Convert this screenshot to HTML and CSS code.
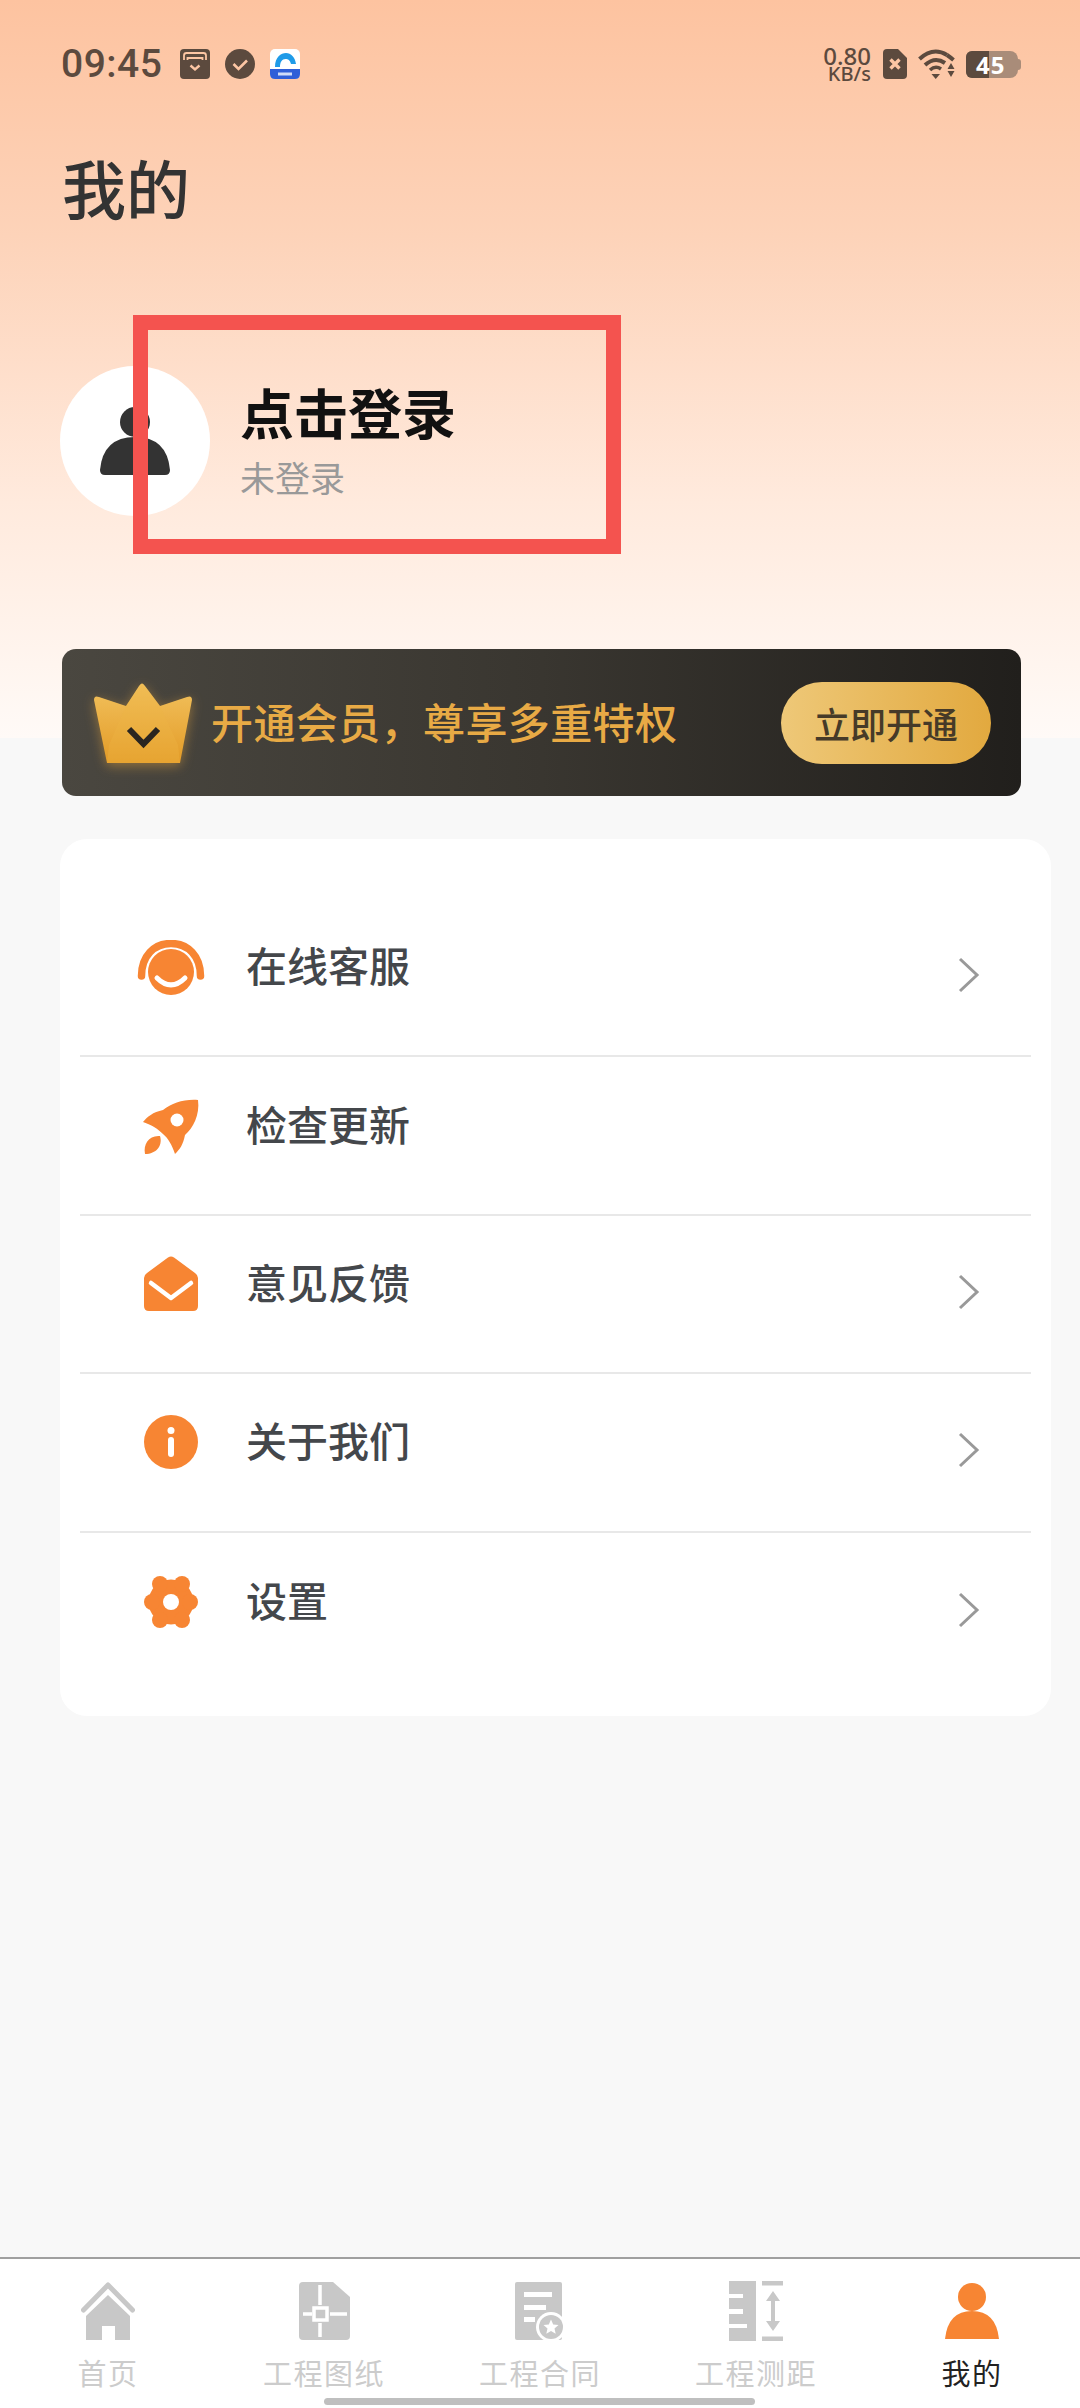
FILE: index.html

```html
<!DOCTYPE html>
<html lang="zh-CN">
<head>
<meta charset="UTF-8">
<meta name="viewport" content="width=device-width, initial-scale=1.0">
<title>我的</title>
<link rel="stylesheet" href="styles.css">
</head>
<body>
<div class="page">

  <div class="status-bar">
    <div class="status-left">
      <span class="clock">09:45</span>
      <svg class="status-icon" viewBox="0 0 30 30">
        <rect width="30" height="30" rx="4" fill="#5c4a3e"/>
        <path d="M4 11V6.500Q4 4 6.500 4H23.500Q26 4 26 6.500V11M7.500 11V9H22.500V11" fill="none" stroke="#fdc6a4" stroke-width="1.800"/>
        <path d="M7 13H23V23H7Z" fill="#5c4a3e"/>
        <path d="M10.500 16.500L15 20.500L19.500 16.500" fill="none" stroke="#fdc6a4" stroke-width="2.400"/>
      </svg>
      <svg class="status-icon" viewBox="0 0 30 30">
        <circle cx="15" cy="15" r="15" fill="#5c4a3e"/>
        <path d="M8.500 15L13.500 20L22 11.500" fill="none" stroke="#fdc6a4" stroke-width="2.600"/>
      </svg>
      <svg class="status-icon" viewBox="0 0 30 30">
        <rect width="30" height="30" rx="5" fill="#fff"/>
        <path d="M0 20H30V25Q30 30 25 30H5Q0 30 0 25Z" fill="#2f5fd8"/>
        <path d="M5 18C5 8 11 4 16 4C21 4 25 8 26 15H21C20 11 18 10 15.500 10C12 10 10 13 10 18Z" fill="#1f9be8"/>
        <rect x="8" y="23.500" width="14" height="3" fill="#cfdcf8"/>
      </svg>
    </div>
    <div class="status-right">
      <div class="net-speed">
        <span class="net-value">0.80</span>
        <span class="net-unit">KB/s</span>
      </div>
      <svg class="sim-icon" viewBox="0 0 24 30">
        <path d="M4 0H15L24 9V26Q24 30 20 30H4Q0 30 0 26V4Q0 0 4 0Z" fill="#5c4a3e"/>
        <path d="M7.500 10.500L16.500 19.500M16.500 10.500L7.500 19.500" stroke="#fdc6a4" stroke-width="3.400"/>
      </svg>
      <svg class="wifi-icon" viewBox="0 0 37 30">
        <path d="M1.500 10Q15 -2.500 29 6" fill="none" stroke="#5c4a3e" stroke-width="4"/>
        <path d="M29 6Q32 8 35.500 11" fill="none" stroke="#5c4a3e" stroke-width="4"/>
        <path d="M7 16Q17 7 27 14" fill="none" stroke="#5c4a3e" stroke-width="4"/>
        <path d="M12 21Q17.500 16 23 20" fill="none" stroke="#5c4a3e" stroke-width="3.500"/>
        <path d="M13.500 25H22L17.700 30Z" fill="#5c4a3e"/>
        <path d="M33 14L36.500 20H29.500ZM29.500 22H36.500L33 28Z" fill="#5c4a3e"/>
      </svg>
      <div class="battery">
        <div class="battery-fill"></div>
        <span class="battery-text">45</span>
        <div class="battery-tip"></div>
      </div>
    </div>
  </div>

  <h1 class="page-title">我的</h1>

  <div class="profile">
    <div class="avatar">
      <svg class="avatar-icon" viewBox="0 0 70 68">
        <circle cx="35" cy="15" r="15" fill="#333"/>
        <path d="M0 63Q3 30 35 30Q67 30 70 63Q70 68 65 68H5Q0 68 0 63Z" fill="#333"/>
      </svg>
    </div>
    <div class="profile-text">
      <div class="profile-name">点击登录</div>
      <div class="profile-sub">未登录</div>
    </div>
  </div>

  <div class="vip-banner">
    <svg class="vip-crown" viewBox="0 0 98 80">
      <defs>
        <linearGradient id="crownGold" x1="0" y1="0" x2="0" y2="1">
          <stop offset="0" stop-color="#f2c25e"/>
          <stop offset="1" stop-color="#e39b27"/>
        </linearGradient>
      </defs>
      <path d="M0 17Q0 12 5 14L32 23L45 3Q48 -2 51 3L66 23L93 14Q98 12 98 17L86 80H13Z" fill="url(#crownGold)"/>
      <path d="M48 0L66 23L84 62L86 80H13L15 62L32 23Z" fill="#eeb445" opacity="0.35"/>
      <path d="M35 46L49.500 61L64 46" fill="none" stroke="#2a2520" stroke-width="6"/>
    </svg>
    <span class="vip-text">开通会员，尊享多重特权</span>
    <div class="vip-button">立即开通</div>
  </div>

  <div class="menu-card">
    <div class="menu-row">
      <div class="menu-main">
        <div class="menu-icon">
          <svg width="68" height="55" viewBox="0 0 68 55">
            <path d="M4.500 36C4.500 16 17 3.500 34 3.500C51 3.500 63.500 16 63.500 36" fill="none" stroke="#f78533" stroke-width="7.500" stroke-linecap="round"/>
            <circle cx="34" cy="32" r="23" fill="#f78533"/>
            <path d="M20 38Q34 52 48 38" fill="none" stroke="#fff" stroke-width="5" stroke-linecap="round"/>
          </svg>
        </div>
        <span class="menu-label">在线客服</span>
      </div>
      <svg class="menu-arrow" viewBox="0 0 22 36"><path d="M2 2L19 18L2 34" fill="none" stroke="#999" stroke-width="3"/></svg>
    </div>
    <div class="menu-row">
      <div class="menu-main">
        <div class="menu-icon">
          <svg width="82" height="80" viewBox="5 1 82 80">
            <path d="M73 15C75 30 68 43 60 50C58 60 55 64 50 69C47 60 43 53 38 49C33 44 27 40 18 37C22 32 28 27 38 25C47 18 59 14 73 15Z" fill="#f78533"/>
            <circle cx="52" cy="35" r="6.500" fill="#fff"/>
            <path d="M35 51C38 61 31 69 20 69C18 59 24 50 35 51Z" fill="#f78533"/>
          </svg>
        </div>
        <span class="menu-label">检查更新</span>
      </div>
    </div>
    <div class="menu-row">
      <div class="menu-main">
        <div class="menu-icon">
          <svg width="54" height="55" viewBox="0 0 54 55">
            <path d="M24 1.500Q27 -0.500 30 1.500L51 17Q54 19 54 22V50Q54 55 49 55H5Q0 55 0 50V22Q0 19 3 17Z" fill="#f78533"/>
            <path d="M7 27L27 42L47 27" fill="none" stroke="#fff" stroke-width="4.500" stroke-linecap="round" stroke-linejoin="round"/>
          </svg>
        </div>
        <span class="menu-label">意见反馈</span>
      </div>
      <svg class="menu-arrow" viewBox="0 0 22 36"><path d="M2 2L19 18L2 34" fill="none" stroke="#999" stroke-width="3"/></svg>
    </div>
    <div class="menu-row">
      <div class="menu-main">
        <div class="menu-icon">
          <svg width="54" height="54" viewBox="0 0 54 54">
            <circle cx="27" cy="27" r="27" fill="#f78533"/>
            <circle cx="27" cy="15.500" r="3.500" fill="#fff"/>
            <rect x="24" y="22" width="6" height="20" rx="3" fill="#fff"/>
          </svg>
        </div>
        <span class="menu-label">关于我们</span>
      </div>
      <svg class="menu-arrow" viewBox="0 0 22 36"><path d="M2 2L19 18L2 34" fill="none" stroke="#999" stroke-width="3"/></svg>
    </div>
    <div class="menu-row">
      <div class="menu-main">
        <div class="menu-icon">
          <svg width="54" height="52" viewBox="0 0 54 52">
            <circle cx="27" cy="26" r="22.500" fill="#f78533"/>
            <circle cx="16" cy="8" r="8" fill="#f78533"/>
            <circle cx="38" cy="8" r="8" fill="#f78533"/>
            <circle cx="46" cy="26" r="8" fill="#f78533"/>
            <circle cx="38" cy="44" r="8" fill="#f78533"/>
            <circle cx="16" cy="44" r="8" fill="#f78533"/>
            <circle cx="8" cy="26" r="8" fill="#f78533"/>
            <circle cx="27" cy="26" r="8" fill="#fff"/>
          </svg>
        </div>
        <span class="menu-label">设置</span>
      </div>
      <svg class="menu-arrow" viewBox="0 0 22 36"><path d="M2 2L19 18L2 34" fill="none" stroke="#999" stroke-width="3"/></svg>
    </div>
  </div>

  <div class="tab-bar">
    <div class="tab">
      <svg class="tab-icon" width="54" height="58" viewBox="0 0 54 58">
        <path d="M2.500 28L27 3L51.500 28" fill="none" stroke="#c8c8c8" stroke-width="5" stroke-linecap="round" stroke-linejoin="round"/>
        <path d="M27 13L49 34V58H34V44H21V58H5V34Z" fill="#c8c8c8"/>
      </svg>
      <span class="tab-label">首页</span>
    </div>
    <div class="tab">
      <svg class="tab-icon" width="51" height="58" viewBox="0 0 51 58">
        <path d="M4 0H34L51 15V54Q51 58 47 58H4Q0 58 0 54V4Q0 0 4 0Z" fill="#c8c8c8"/>
        <path d="M21 3V23M21 41V55M4 32H13M31 32H48" stroke="#fff" stroke-width="3.500"/>
        <rect x="15" y="26" width="13" height="12" fill="none" stroke="#fff" stroke-width="3.500"/>
      </svg>
      <span class="tab-label">工程图纸</span>
    </div>
    <div class="tab">
      <svg class="tab-icon" width="51" height="58" viewBox="15 12 51 58">
        <rect x="15" y="12" width="47" height="58" rx="2" fill="#c8c8c8"/>
        <path d="M24 24.500H52M24 37.500H46M24 49.500H35" stroke="#fff" stroke-width="5"/>
        <circle cx="51" cy="57" r="15" fill="#fff"/>
        <circle cx="51" cy="57" r="12" fill="#c8c8c8"/>
        <path d="M51 49.500L53.200 54.500L58.500 55L54.500 58.500L55.700 63.700L51 61L46.300 63.700L47.500 58.500L43.500 55L48.800 54.500Z" fill="#fff"/>
      </svg>
      <span class="tab-label">工程合同</span>
    </div>
    <div class="tab">
      <svg class="tab-icon" width="54" height="60" viewBox="0 0 54 60">
        <path d="M0 0H27V60H0V47H18V43H0V33H14V28H0V17H14V13H0Z" fill="#c8c8c8"/>
        <path d="M33 2.200H54M33 57.800H54" stroke="#c8c8c8" stroke-width="4.500"/>
        <path d="M44 10L51 20H46V40H51L44 50L37 40H42V20H37Z" fill="#c8c8c8"/>
      </svg>
      <span class="tab-label">工程测距</span>
    </div>
    <div class="tab tab-active">
      <svg class="tab-icon" width="54" height="56" viewBox="0 0 54 56">
        <circle cx="27" cy="14" r="14" fill="#f78533"/>
        <path d="M0 56Q3 28 27 28Q51 28 54 56Z" fill="#f78533"/>
      </svg>
      <span class="tab-label">我的</span>
    </div>
    <div class="home-indicator"></div>
  </div>

  <div class="mark-box"></div>
</div>
</body>
</html>
```

FILE: styles.css

```css
* {
  box-sizing: border-box;
}

body {
  margin: 0;
  font-family: "Noto Sans CJK SC", "Noto Sans", sans-serif;
  color: #333;
}

.page {
  position: relative;
  width: 1080px;
  height: 2408px;
  display: flex;
  flex-direction: column;
  overflow: hidden;
  background: #f8f8f8 linear-gradient(180deg, #fdc3a0 0%, #fdd3b9 32%, #ffeadd 68%, #fffaf7 100%) no-repeat;
  background-size: 100% 738px;
}

/* status bar */
.status-bar {
  display: flex;
  justify-content: space-between;
  align-items: center;
  height: 30px;
  margin-top: 49px;
  padding: 0 62px 0 61px;
  color: #5c4a3e;
}

.status-left,
.status-right {
  display: flex;
  align-items: center;
}

.clock {
  width: 119px;
  font-family: Roboto, sans-serif;
  font-size: 39px;
  font-weight: 500;
  line-height: 30px;
  letter-spacing: 0.5px;
}

.status-icon {
  width: 30px;
  height: 30px;
  margin-right: 15px;
}

.net-speed {
  display: flex;
  flex-direction: column;
  align-items: flex-end;
  width: 50px;
  font-family: "Noto Sans", sans-serif;
  font-weight: 500;
}

.net-value {
  font-size: 24px;
  line-height: 20px;
}

.net-unit {
  font-size: 20px;
  line-height: 16px;
}

.sim-icon {
  width: 24px;
  height: 30px;
  margin-left: 12px;
}

.wifi-icon {
  width: 37px;
  height: 30px;
  margin-left: 11px;
}

.battery {
  position: relative;
  width: 52px;
  height: 27px;
  margin-left: 11px;
  border-radius: 6px 8px 8px 6px;
  background: #a98c79;
}

.battery-fill {
  width: 23px;
  height: 27px;
  border-radius: 6px 0 0 6px;
  background: #5c4a3e;
}

.battery-text {
  position: absolute;
  top: 0;
  left: 10px;
  font-family: "Noto Sans", sans-serif;
  font-size: 24px;
  font-weight: 700;
  line-height: 27px;
  letter-spacing: 1px;
  color: #fff;
}

.battery-tip {
  position: absolute;
  top: 8px;
  right: -3px;
  width: 3px;
  height: 11px;
  border-radius: 0 3px 3px 0;
  background: #a98c79;
}

/* header */
.page-title {
  margin: 75px 0 0;
  padding-left: 62px;
  font-size: 64px;
  font-weight: 500;
  line-height: 64px;
  color: #333;
}

.profile {
  display: flex;
  align-items: center;
  gap: 30px;
  margin-top: 148px;
  padding-left: 60px;
}

.avatar {
  display: flex;
  justify-content: center;
  align-items: center;
  width: 150px;
  height: 150px;
  border-radius: 50%;
  background: #fff;
}

.avatar-icon {
  width: 70px;
  height: 68px;
}

.profile-text {
  display: flex;
  flex-direction: column;
  gap: 18px;
}

.profile-name {
  font-size: 54px;
  font-weight: 700;
  line-height: 54px;
  color: #111;
}

.profile-sub {
  font-size: 35px;
  line-height: 40px;
  color: #999;
}

/* vip banner */
.vip-banner {
  display: flex;
  align-items: center;
  width: 959px;
  height: 147px;
  margin: 133px 0 0 62px;
  padding: 0 30px 0 32px;
  border-radius: 14px;
  background: linear-gradient(90deg, #4a4740 0%, #393630 50%, #211f1c 100%);
}

.vip-crown {
  width: 98px;
  height: 80px;
  margin-right: 19px;
  filter: drop-shadow(0 3px 6px rgba(240, 170, 60, 0.45));
}

.vip-text {
  flex: 1;
  padding-bottom: 4px;
  font-size: 42px;
  font-weight: 500;
  line-height: 50px;
  letter-spacing: 0.4px;
  color: #e8aa45;
}

.vip-button {
  width: 210px;
  height: 82px;
  border-radius: 41px;
  background: linear-gradient(90deg, #eec878, #e2a93f);
  font-size: 36px;
  font-weight: 500;
  line-height: 82px;
  text-align: center;
  color: #463a28;
}

/* menu */
.menu-card {
  width: 991px;
  height: 877px;
  margin: 43px 0 0 60px;
  padding: 60px 20px 0;
  border-radius: 27px;
  background: #fff;
}

.menu-row {
  display: flex;
  justify-content: space-between;
  align-items: center;
  height: 158.4px;
  padding: 0 51px 0 50px;
  border-bottom: 2px solid #e8e8e8;
}

.menu-row:last-child {
  border-bottom: none;
}

.menu-main {
  display: flex;
  align-items: center;
  padding-bottom: 20px;
}

.menu-icon {
  display: flex;
  justify-content: center;
  align-items: center;
  width: 82px;
  height: 80px;
  margin-right: 34px;
}

.menu-label {
  margin-bottom: 6px;
  font-size: 41px;
  font-weight: 500;
  line-height: 50px;
  color: #44474b;
}

.menu-arrow {
  width: 22px;
  height: 36px;
  margin-bottom: 4px;
}

/* tab bar */
.tab-bar {
  position: relative;
  display: flex;
  height: 151px;
  margin-top: auto;
  border-top: 2px solid #a0a0a0;
  background: #fff;
}

.tab {
  flex: 1;
  display: flex;
  flex-direction: column;
  align-items: center;
  padding-top: 22px;
}

.tab-icon {
  height: 60px;
}

.tab-label {
  margin-top: 15px;
  font-size: 29px;
  line-height: 32px;
  letter-spacing: 1.5px;
  color: #ccc;
}

.tab-active .tab-label {
  color: #222;
}

.home-indicator {
  position: absolute;
  left: 324px;
  bottom: 3px;
  width: 431px;
  height: 7px;
  border-radius: 4px;
  background: #bfbfbf;
}

/* red annotation box drawn over the shot */
.mark-box {
  position: absolute;
  left: 133px;
  top: 315px;
  width: 488px;
  height: 239px;
  border: 15px solid #f4534f;
}
```
